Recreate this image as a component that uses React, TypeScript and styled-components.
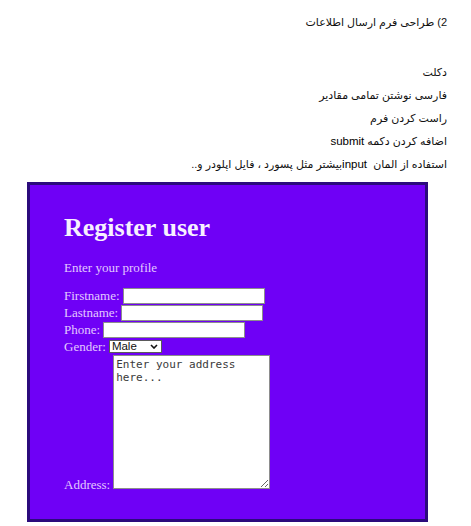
import React from "react";
import styled, { createGlobalStyle } from "styled-components";

const Global = createGlobalStyle`
  html, body { margin: 0; padding: 0; background: #ffffff; }
  body { font-family: "Liberation Sans", "DejaVu Sans", sans-serif; }
`;

const Page = styled.div`
  width: 471px;
  min-height: 526px;
  box-sizing: border-box;
  padding: 11px 24px 0 27px;
  display: flex;
  flex-direction: column;
`;

const Notes = styled.div`
  display: flex;
  flex-direction: column;
  direction: rtl;
  text-align: right;
`;

const Line = styled.p<{ $top?: number }>`
  margin: ${(p) => p.$top ?? 0}px 0 0;
  height: 23px;
  line-height: 23px;
  font-size: 11px;
  color: #111111;
  white-space: pre;
`;

const Latin = styled.span`
  font-family: "Liberation Sans", Arial, sans-serif;
  font-size: 11.5px;
  color: #000000;
`;

const Card = styled.form`
  box-sizing: border-box;
  width: 401px;
  height: 340px;
  margin-top: 6px;
  border: 3px solid #2b0b7c;
  background: #6f00f6;
  padding: 28px 0 0 34px;
  font-family: "Liberation Serif", "DejaVu Serif", serif;
  color: #e3c9ff;
  display: flex;
  flex-direction: column;
`;

const Title = styled.h1`
  margin: 0;
  font-size: 26px;
  line-height: 30px;
  font-weight: bold;
  color: #f7f0ff;
`;

const Subtitle = styled.p`
  margin: 17px 0 0;
  font-size: 13px;
  line-height: 15px;
`;

const Fields = styled.div`
  margin-top: 12px;
  display: flex;
  flex-direction: column;
`;

const Row = styled.div<{ $bottom?: boolean }>`
  display: flex;
  align-items: ${(p) => (p.$bottom ? "flex-end" : "center")};
  height: ${(p) => (p.$bottom ? "auto" : "17px")};
  gap: 3px;
`;

const Label = styled.label<{ $bottom?: boolean }>`
  font-size: 13px;
  line-height: ${(p) => (p.$bottom ? "13px" : "15px")};
  margin-bottom: ${(p) => (p.$bottom ? "-2px" : "0")};
`;

const TextInput = styled.input`
  box-sizing: border-box;
  width: 142px;
  height: 16px;
  margin: 0;
  padding: 0 2px;
  border: 1px solid #8d8d8d;
  background: #ffffff;
  font-size: 11px;
`;

const SelectWrap = styled.div`
  position: relative;
  display: flex;
`;

const Select = styled.select`
  appearance: none;
  box-sizing: border-box;
  width: 53px;
  height: 13px;
  margin: 0;
  padding: 0 0 0 2px;
  border: 1px solid #5a5a5a;
  border-radius: 0;
  background: #ffffff;
  color: #111111;
  font-family: "Liberation Sans", "DejaVu Sans", sans-serif;
  font-size: 11.5px;
  line-height: 11px;
`;

const Chevron = styled.svg`
  position: absolute;
  right: 4px;
  top: 4px;
  width: 8px;
  height: 5px;
  pointer-events: none;
`;

const Address = styled.textarea`
  box-sizing: border-box;
  width: 157px;
  height: 134px;
  margin: 0;
  padding: 2px;
  border: 1px solid #8d8d8d;
  background: #ffffff;
  font-family: "DejaVu Sans Mono", "Liberation Mono", monospace;
  font-size: 11px;
  line-height: 13px;
  color: #333333;
  &::placeholder {
    color: #3a3a3a;
    opacity: 1;
  }
`;

export default function App() {
  return (
    <>
      <Global />
      <Page>
        <Notes>
          <Line>2) طراحی فرم ارسال اطلاعات</Line>
          <Line $top={27}>دکلت</Line>
          <Line>فارسی نوشتن تمامی مقادیر</Line>
          <Line>راست کردن فرم</Line>
          <Line>
            اضافه کردن دکمه <Latin>submit</Latin>
          </Line>
          <Line>
            استفاده از المان  <Latin>input</Latin>بیشتر مثل پسورد ، فایل اپلودر و..
          </Line>
        </Notes>
        <Card onSubmit={(e) => e.preventDefault()}>
          <Title>Register user</Title>
          <Subtitle>Enter your profile</Subtitle>
          <Fields>
            <Row>
              <Label>Firstname:</Label>
              <TextInput type="text" />
            </Row>
            <Row>
              <Label>Lastname:</Label>
              <TextInput type="text" />
            </Row>
            <Row>
              <Label>Phone:</Label>
              <TextInput type="text" />
            </Row>
            <Row>
              <Label>Gender:</Label>
              <SelectWrap>
                <Select defaultValue="male">
                  <option value="male">Male</option>
                  <option value="female">Female</option>
                </Select>
                <Chevron viewBox="0 0 8 5">
                  <path d="M1 1 L4 4 L7 1" fill="none" stroke="#111" strokeWidth="1.6" />
                </Chevron>
              </SelectWrap>
            </Row>
            <Row $bottom>
              <Label $bottom>Address:</Label>
              <Address placeholder="Enter your address here..." />
            </Row>
          </Fields>
        </Card>
      </Page>
    </>
  );
}
